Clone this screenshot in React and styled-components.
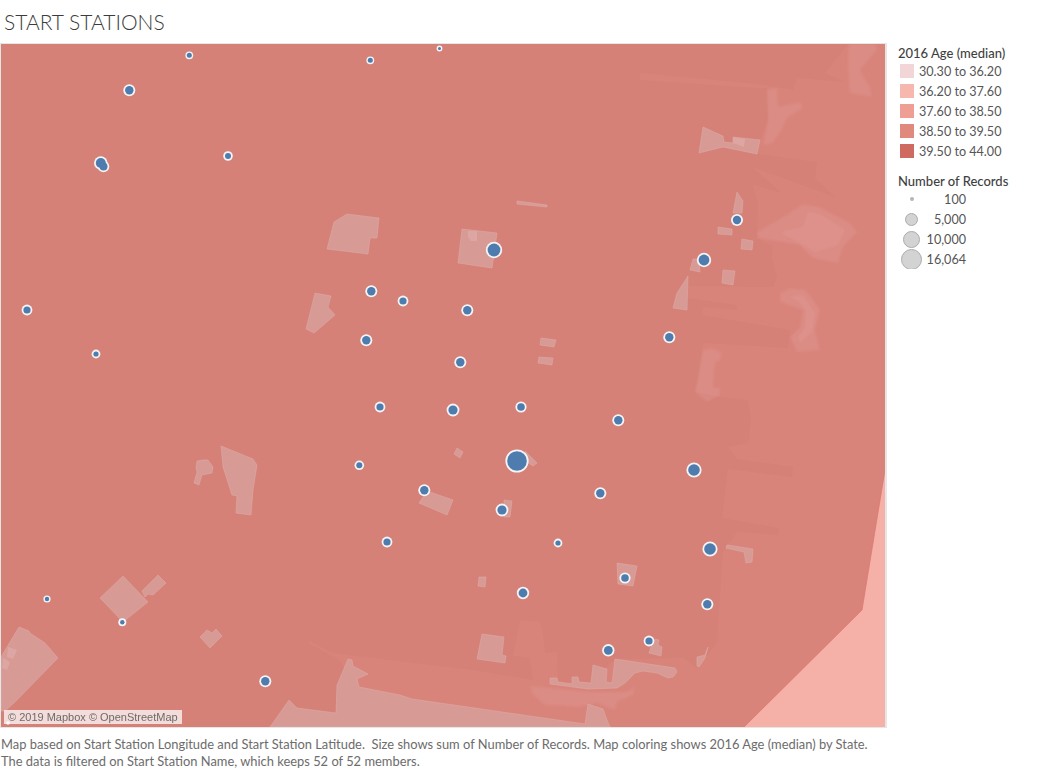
import React from "react";
import styled, { createGlobalStyle } from "styled-components";

const GlobalStyle = createGlobalStyle`
  html, body {
    margin: 0;
    background: #fff;
    font-family: "Lato", "Open Sans", sans-serif;
  }
`;

const Page = styled.div`
  width: 1037px;
  height: 770px;
  overflow: hidden;
`;

const Title = styled.h1`
  margin: 0;
  height: 43px;
  padding: 9px 0 0 4px;
  box-sizing: border-box;
  font-size: 21px;
  line-height: 25px;
  font-weight: 300;
  color: #3c3c3c;
`;

const Body = styled.div`
  display: flex;
  align-items: flex-start;
`;

const MapFrame = styled.div`
  position: relative;
  width: 884px;
  height: 683px;
  border: 1px solid #e6e6e6;
  border-right-width: 2px;
  flex: none;
`;

const MapSvg = styled.svg`
  display: block;
  width: 884px;
  height: 683px;
`;

const SoftGroup = styled.g`
  filter: blur(0.8px);
`;

const Attribution = styled.div`
  position: absolute;
  left: 3px;
  bottom: 3px;
  padding: 0 4px;
  height: 14px;
  line-height: 14px;
  font-family: "Liberation Sans", Arial, sans-serif;
  font-size: 11px;
  color: #6b6b6b;
  background: rgba(255, 255, 255, 0.72);
  white-space: nowrap;
`;

const Legend = styled.aside`
  padding: 2px 0 0 11px;
  font-size: 12.6px;
  color: #555;
`;

const LegendTitle = styled.div`
  height: 16px;
  line-height: 16px;
  font-weight: 500;
  font-size: 13px;
  color: #3f3f3f;
  white-space: nowrap;
`;

const ColorList = styled.div`
  display: flex;
  flex-direction: column;
  margin-bottom: 12px;
`;

const ColorRow = styled.div`
  display: flex;
  align-items: center;
  height: 20px;
  padding-left: 2px;
  gap: 5px;
  white-space: nowrap;
`;

const Swatch = styled.span`
  width: 14px;
  height: 14px;
  flex: none;
  background: ${(p) => p.$color};
`;

const SizeRow = styled.div`
  display: grid;
  grid-template-columns: 27px 41px;
  align-items: center;
  height: 20px;
`;

const SizeCell = styled.span`
  display: flex;
  justify-content: center;
  align-items: center;
  height: 20px;
  overflow: hidden;
`;

const SizeDot = styled.span`
  box-sizing: border-box;
  flex: none;
  width: ${(p) => p.$size}px;
  height: ${(p) => p.$size}px;
  border-radius: 50%;
  border: ${(p) => (p.$size > 6 ? "1.5px solid #ababab" : "none")};
  background-color: ${(p) => (p.$size > 6 ? "#d3d3d3" : "#b5b5b5")};
`;

const SizeLabel = styled.span`
  text-align: right;
`;

const Footer = styled.footer`
  padding: 8px 0 0 1px;
  font-size: 12.9px;
  line-height: 16.5px;
  color: #6c6c6c;
  white-space: pre;
`;

const pts = (list) => list.map((p) => p.join(",")).join(" ");

const lighterRegion = [
  [848, 44], [885, 44], [885, 470], [862, 610], [744, 727], [400, 727], [360, 700], [340, 660], [310, 644],
  [308, 640], [330, 652], [347, 655], [473, 670], [533, 680], [530, 658], [513, 656], [520, 620], [540, 622],
  [543, 633], [545, 653], [557, 652], [558, 682], [590, 683], [615, 659], [683, 658], [697, 668], [717, 643],
  [723, 552], [737, 532], [778, 535], [779, 528], [722, 518], [728, 469], [792, 477], [793, 467], [737, 459],
  [728, 447], [748, 443], [751, 420], [748, 400], [720, 397], [695, 392], [698, 380], [703, 343], [788, 348],
  [790, 330], [702, 315], [703, 307], [737, 310], [737, 305], [687, 298], [688, 286], [773, 287], [777, 277],
  [772, 257], [773, 247], [757, 238], [758, 203], [753, 185], [782, 193], [752, 167], [835, 197], [815, 178],
  [817, 162], [758, 154], [760, 140], [768, 120], [767, 88], [757, 88], [640, 80], [640, 73], [757, 84],
  [793, 90], [797, 78], [845, 82], [825, 73],
];

const parks = [
  [[327, 249], [334, 222], [347, 214], [379, 218], [377, 238], [370, 238], [368, 254]],
  [[462, 229], [497, 233], [492, 268], [458, 263]],
  [[517, 201], [547, 205], [547, 207], [517, 204]],
  [[315, 293], [331, 296], [328, 307], [335, 315], [314, 333], [306, 329]],
  [[541, 338], [556, 340], [554, 347], [540, 345]],
  [[539, 357], [553, 358], [552, 365], [538, 363]],
  [[457, 448], [463, 452], [460, 458], [454, 454]],
  [[525, 451], [537, 463], [533, 466], [527, 462]],
  [[427, 491], [453, 500], [447, 515], [419, 503]],
  [[504, 500], [512, 501], [510, 517], [504, 517]],
  [[123, 576], [148, 602], [123, 622], [100, 598]],
  [[158, 575], [166, 583], [153, 595], [148, 594], [145, 597], [142, 591]],
  [[207, 630], [212, 633], [216, 629], [222, 636], [210, 648], [200, 637]],
  [[197, 461], [203, 460], [208, 460], [213, 467], [212, 473], [202, 475], [199, 485], [194, 483], [197, 472], [196, 468]],
  [[221, 446], [253, 459], [257, 465], [253, 490], [251, 515], [236, 513], [237, 496], [232, 495], [223, 467]],
  [[1, 657], [19, 627], [29, 631], [30, 633], [45, 643], [58, 658], [15, 702], [5, 711], [1, 711]],
  [[270, 727], [289, 700], [297, 708], [336, 713], [337, 685], [348, 659], [352, 660], [353, 666], [368, 674], [357, 679], [359, 687], [400, 695], [412, 699], [585, 724], [588, 704], [603, 709], [607, 720], [610, 727]],
  [[615, 659], [675, 668], [677, 672], [673, 677], [668, 678], [657, 673], [643, 671], [635, 673], [625, 683], [617, 688], [588, 689], [550, 684], [550, 678], [557, 678], [558, 682], [572, 684], [572, 677], [578, 677], [579, 682], [591, 683], [593, 665], [607, 669], [606, 682], [612, 683]],
  [[655, 639], [659, 640], [658, 645], [662, 647], [661, 656], [649, 653], [651, 647]],
  [[708, 647], [705, 658], [699, 667], [697, 666], [697, 657], [705, 655]],
  [[482, 634], [504, 637], [502, 655], [506, 656], [505, 663], [477, 659]],
  [[479, 577], [486, 577], [485, 587], [478, 586]],
  [[617, 563], [637, 566], [633, 586], [618, 584]],
  [[727, 545], [753, 549], [752, 562], [746, 563], [744, 552], [726, 548]],
  [[699, 153], [703, 127], [723, 136], [724, 142], [733, 143], [733, 137], [760, 140], [757, 154], [723, 147]],
  [[737, 192], [743, 201], [742, 213], [733, 213]],
  [[718, 227], [732, 229], [732, 235], [718, 234]],
  [[742, 239], [753, 241], [752, 250], [741, 249]],
  [[693, 259], [699, 259], [700, 272], [690, 270]],
  [[723, 270], [735, 271], [733, 285], [722, 283]],
  [[688, 276], [687, 310], [673, 308], [677, 293]],
];

const parkHighlights = [
  [[468, 231], [477, 231], [477, 241], [471, 241], [468, 237]],
  [[733, 137], [745, 139], [744, 147], [733, 143]],
  [[8, 647], [17, 650], [13, 659], [7, 657]],
  [[3, 658], [10, 662], [7, 670], [2, 668]],
];

const washes = [
  [[531, 686], [590, 692], [625, 692], [635, 687], [633, 695], [617, 702], [615, 710], [597, 703], [580, 707], [563, 706], [545, 705], [532, 694]],
  [[767, 90], [777, 88], [778, 107], [800, 102], [803, 108], [787, 118], [783, 128], [773, 143], [763, 145], [768, 120]],
  [[848, 50], [850, 44], [875, 44], [877, 50], [860, 70], [870, 87], [872, 97], [850, 93], [848, 70]],
  [[703, 350], [712, 348], [722, 353], [720, 360], [715, 363], [713, 387], [720, 388], [720, 395], [707, 402], [695, 392]],
  [[757, 232], [783, 217], [803, 204], [820, 207], [850, 223], [857, 232], [843, 247], [838, 263], [813, 258], [800, 245], [758, 238]],
  [[780, 232], [803, 227], [808, 212], [820, 214], [845, 230], [838, 245], [815, 252], [803, 245]],
  [[780, 293], [790, 288], [806, 290], [820, 310], [815, 330], [820, 350], [797, 352], [790, 337], [800, 327], [803, 310], [780, 302]],
  [[788, 297], [803, 295], [815, 313], [812, 332], [800, 343], [798, 337], [805, 328], [806, 310], [797, 300]],
  [[280, 727], [295, 716], [310, 712], [322, 718], [320, 727]],
];

const stations = [
  [189.3, 55.3, 3.9], [370.3, 60.3, 3.9], [439.5, 48.5, 2.9], [129.3, 90.3, 6], [228, 156, 4.8], [27, 310, 5.4],
  [96, 354, 4.4], [371.3, 291.3, 6], [403, 301, 5.4], [467.3, 310.3, 6], [366.3, 340.3, 6], [460.3, 362.3, 6],
  [380, 407, 5.4], [453, 410, 6.4], [521, 407, 5.6], [618.3, 420.3, 6], [359.3, 465.3, 4.8], [517, 461, 11.6],
  [694, 470, 7.6], [424.3, 490.3, 6], [600.3, 493.3, 6], [502, 510, 6.4], [387, 542, 5.4], [558, 543, 4.4],
  [710, 549, 7.6], [625, 578, 5.6], [523, 593, 6.2], [707.3, 604.3, 6], [47, 599, 3.6], [122.3, 622.3, 4],
  [649, 641, 5.4], [608.3, 650.3, 6.2], [265.3, 681.3, 6], [494, 250, 8.2], [704, 260, 7.2], [737, 220, 6],
  [669.3, 337.3, 6], [8, 723, 1.8],
];

const colorLegend = [
  ["#f2d6d7", "30.30 to 36.20"],
  ["#f6b7af", "36.20 to 37.60"],
  ["#ef9e93", "37.60 to 38.50"],
  ["#e08a7e", "38.50 to 39.50"],
  ["#cf6a60", "39.50 to 44.00"],
];

const sizeLegend = [
  [4, "100"],
  [13, "5,000"],
  [17, "10,000"],
  [21, "16,064"],
];

const StationMap = () => (
  <MapSvg viewBox="1 44 884 683">
    <rect x="0" y="44" width="886" height="684" fill="#d58178" />
    <polygon points={pts(lighterRegion)} fill="#d9847b" />
    <polygon points="885,470 862,610 744,727 886,727 886,470" fill="#f5b0a7" />
    <polyline points="885,470 862,610 744,727" fill="none" stroke="#e0766c" strokeWidth="0.7" />
    <SoftGroup>
      {washes.map((shape, i) => (
        <polygon key={i} points={pts(shape)} fill="#e2a8a2" opacity="0.22" />
      ))}
    </SoftGroup>
    {parks.map((shape, i) => (
      <polygon key={i} points={pts(shape)} fill="#d79a95" stroke="#dfaeaa" strokeWidth="0.5" />
    ))}
    {parkHighlights.map((shape, i) => (
      <polygon key={i} points={pts(shape)} fill="#dea6a2" />
    ))}
    {stations.map(([x, y, r]) => (
      <g key={`${x}-${y}`}>
        <circle cx={x} cy={y} r={r} fill="#f4f4f4" />
        {r > 2 && <circle cx={x} cy={y} r={r < 4 ? r - 1.4 : r - 1.8} fill="#4e7cae" />}
      </g>
    ))}
    <circle cx="100.8" cy="163" r="6.8" fill="#f4f4f4" />
    <circle cx="103.5" cy="166.5" r="5.8" fill="#f4f4f4" />
    <circle cx="100.8" cy="163" r="5" fill="#4e7cae" />
    <circle cx="103.5" cy="166.5" r="4" fill="#4e7cae" />
  </MapSvg>
);

const App = () => (
  <Page>
    <GlobalStyle />
    <Title>START STATIONS</Title>
    <Body>
      <MapFrame>
        <StationMap />
        <Attribution>© 2019 Mapbox © OpenStreetMap</Attribution>
      </MapFrame>
      <Legend>
        <LegendTitle>2016 Age (median)</LegendTitle>
        <ColorList>
          {colorLegend.map(([color, label]) => (
            <ColorRow key={label}>
              <Swatch $color={color} />
              {label}
            </ColorRow>
          ))}
        </ColorList>
        <LegendTitle>Number of Records</LegendTitle>
        {sizeLegend.map(([size, label]) => (
          <SizeRow key={label}>
            <SizeCell>
              <SizeDot $size={size} />
            </SizeCell>
            <SizeLabel>{label}</SizeLabel>
          </SizeRow>
        ))}
      </Legend>
    </Body>
    <Footer>
      {"Map based on Start Station Longitude and Start Station Latitude.  Size shows sum of Number of Records. Map coloring shows 2016 Age (median) by State.\nThe data is filtered on Start Station Name, which keeps 52 of 52 members."}
    </Footer>
  </Page>
);

export default App;
